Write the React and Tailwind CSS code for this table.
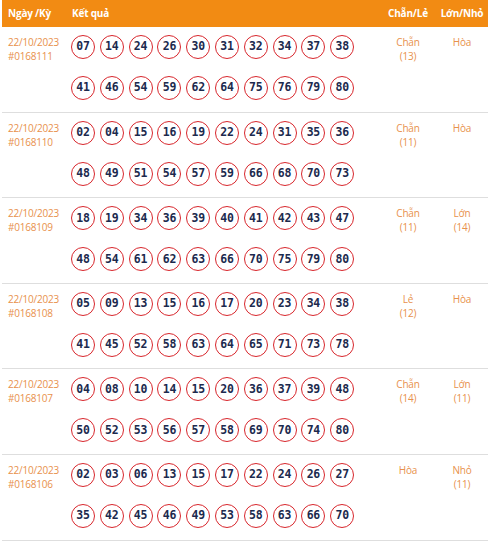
const rows = [
  {
    date: '22/10/2023',
    id: '#0168111',
    nums: ['07', '14', '24', '26', '30', '31', '32', '34', '37', '38', '41', '46', '54', '59', '62', '64', '75', '76', '79', '80'],
    cl: ['Chẵn', '(13)'],
    ln: ['Hòa'],
  },
  {
    date: '22/10/2023',
    id: '#0168110',
    nums: ['02', '04', '15', '16', '19', '22', '24', '31', '35', '36', '48', '49', '51', '54', '57', '59', '66', '68', '70', '73'],
    cl: ['Chẵn', '(11)'],
    ln: ['Hòa'],
  },
  {
    date: '22/10/2023',
    id: '#0168109',
    nums: ['18', '19', '34', '36', '39', '40', '41', '42', '43', '47', '48', '54', '61', '62', '63', '66', '70', '75', '79', '80'],
    cl: ['Chẵn', '(11)'],
    ln: ['Lớn', '(14)'],
  },
  {
    date: '22/10/2023',
    id: '#0168108',
    nums: ['05', '09', '13', '15', '16', '17', '20', '23', '34', '38', '41', '45', '52', '58', '63', '64', '65', '71', '73', '78'],
    cl: ['Lẻ', '(12)'],
    ln: ['Hòa'],
  },
  {
    date: '22/10/2023',
    id: '#0168107',
    nums: ['04', '08', '10', '14', '15', '20', '36', '37', '39', '48', '50', '52', '53', '56', '57', '58', '69', '70', '74', '80'],
    cl: ['Chẵn', '(14)'],
    ln: ['Lớn', '(11)'],
  },
  {
    date: '22/10/2023',
    id: '#0168106',
    nums: ['02', '03', '06', '13', '15', '17', '22', '24', '26', '27', '35', '42', '45', '46', '49', '53', '58', '63', '66', '70'],
    cl: ['Hòa'],
    ln: ['Nhỏ', '(11)'],
  },
];

function Ball({ n }) {
  return (
    <span className="w-6 h-6 rounded-full border-[1.5px] border-[#d8262c] flex items-center justify-center text-[11.5px] font-bold text-[#1c2a4e] font-['DejaVu_Sans_Mono',monospace]">
      {n}
    </span>
  );
}

export default function App() {
  return (
    <div className="w-[493px] h-[546px] bg-white px-[2px] font-['Open_Sans',sans-serif] text-[10px] tracking-[-0.2px] overflow-hidden">
      <div className="w-[486px]">
        {/* Header */}
        <div className="flex items-center h-[27px] bg-[#f28b13] text-white font-bold">
          <div className="w-[64px] pl-[6px]">Ngày /Kỳ</div>
          <div className="flex-1 pl-[6px]">Kết quả</div>
          <div className="w-[56px] text-center">Chẵn/Lẻ</div>
          <div className="w-[52px] text-center">Lớn/Nhỏ</div>
        </div>

        {rows.map((r) => (
          <div key={r.id} className="flex h-[85.6px] border-b border-[#dedede] text-[#e8914c]">
            <div className="w-[64px] pl-[6px] pt-[8px] leading-[14px]">
              <div>{r.date}</div>
              <div>{r.id}</div>
            </div>
            <div className="flex-1 pl-[5px] pt-[8px]">
              <div className="grid grid-cols-[repeat(10,24px)] gap-x-[4.8px] gap-y-[17px]">
                {r.nums.map((n, i) => (
                  <Ball key={i} n={n} />
                ))}
              </div>
            </div>
            <div className="w-[56px] text-center pt-[8px] leading-[14px]">
              {r.cl.map((t) => (
                <div key={t}>{t}</div>
              ))}
            </div>
            <div className="w-[52px] text-center pt-[8px] leading-[14px]">
              {r.ln.map((t) => (
                <div key={t}>{t}</div>
              ))}
            </div>
          </div>
        ))}
      </div>
    </div>
  );
}
